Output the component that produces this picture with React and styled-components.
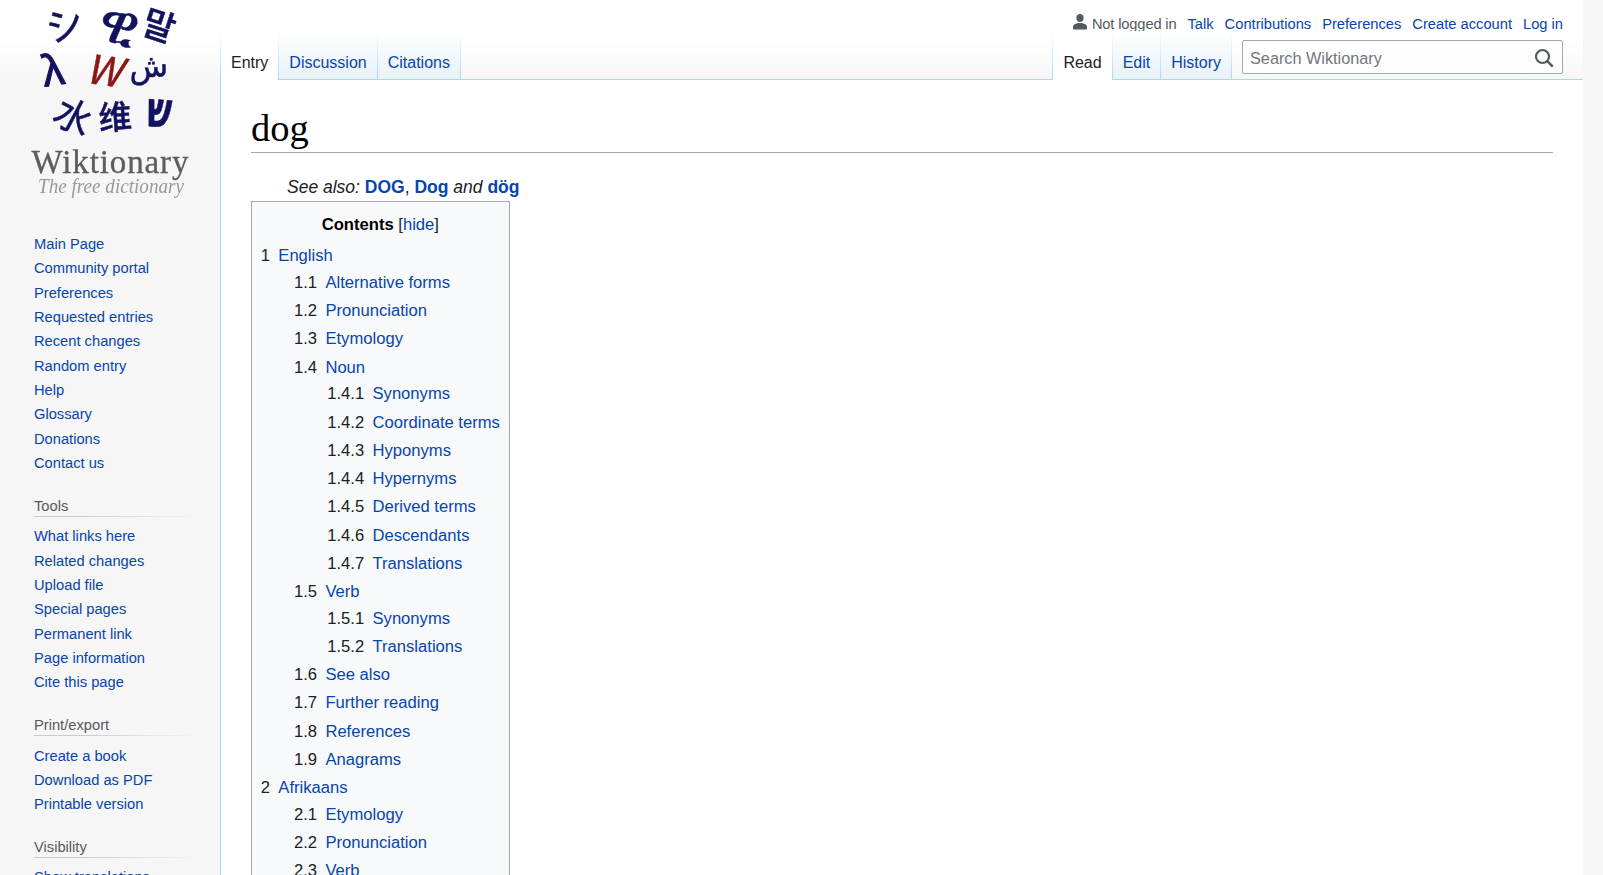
import React from "react";
import styled, { createGlobalStyle } from "styled-components";

const mainNav = [
  "Main Page",
  "Community portal",
  "Preferences",
  "Requested entries",
  "Recent changes",
  "Random entry",
  "Help",
  "Glossary",
  "Donations",
  "Contact us",
];
const portals = [
  {
    title: "Tools",
    links: [
      "What links here",
      "Related changes",
      "Upload file",
      "Special pages",
      "Permanent link",
      "Page information",
      "Cite this page",
    ],
  },
  {
    title: "Print/export",
    links: ["Create a book", "Download as PDF", "Printable version"],
  },
  { title: "Visibility", links: ["Show translations"] },
];
const toc = [
  {
    num: "1",
    name: "English",
    items: [
      { num: "1.1", name: "Alternative forms" },
      { num: "1.2", name: "Pronunciation" },
      { num: "1.3", name: "Etymology" },
      {
        num: "1.4",
        name: "Noun",
        items: [
          { num: "1.4.1", name: "Synonyms" },
          { num: "1.4.2", name: "Coordinate terms" },
          { num: "1.4.3", name: "Hyponyms" },
          { num: "1.4.4", name: "Hypernyms" },
          { num: "1.4.5", name: "Derived terms" },
          { num: "1.4.6", name: "Descendants" },
          { num: "1.4.7", name: "Translations" },
        ],
      },
      {
        num: "1.5",
        name: "Verb",
        items: [
          { num: "1.5.1", name: "Synonyms" },
          { num: "1.5.2", name: "Translations" },
        ],
      },
      { num: "1.6", name: "See also" },
      { num: "1.7", name: "Further reading" },
      { num: "1.8", name: "References" },
      { num: "1.9", name: "Anagrams" },
    ],
  },
  {
    num: "2",
    name: "Afrikaans",
    items: [
      { num: "2.1", name: "Etymology" },
      { num: "2.2", name: "Pronunciation" },
      { num: "2.3", name: "Verb" },
    ],
  },
];

const Logo = () => (
  <LogoSvg viewBox="0 0 220 200" width="220" height="200">
    <Glyph transform="translate(69 38) rotate(-18)" fontSize="38">シ</Glyph>
    <Glyph transform="translate(114 43) rotate(15)" fontSize="58">ዊ</Glyph>
    <Glyph transform="translate(155 38) rotate(18)" fontSize="35" fontWeight="500">말</Glyph>
    <Glyph transform="translate(55 85) rotate(-8)" fontSize="40" strokeWidth="1.2" fontFamily="'DejaVu Serif', serif">λ</Glyph>
    <Glyph $red transform="translate(102 85) rotate(8)" fontSize="40" fontFamily="'Liberation Serif', serif" fontStyle="italic">W</Glyph>
    <Glyph transform="translate(149 77) rotate(-3)" fontSize="32" fontFamily="'DejaVu Sans', sans-serif">ش</Glyph>
    <Glyph transform="translate(67 129) rotate(28)" fontSize="38">水</Glyph>
    <Glyph transform="translate(116 129) rotate(-4)" fontSize="33" fontWeight="500">维</Glyph>
    <Glyph transform="translate(158 127) rotate(5) scale(0.8 1.25)" fontSize="40" fontFamily="'Liberation Serif', serif" fontWeight="700">ש</Glyph>
    <Wordmark x="110" y="173" textLength="157">Wiktionary</Wordmark>
    <Tagline x="111" y="193" textLength="146" lengthAdjust="spacingAndGlyphs">
      The free dictionary
    </Tagline>
  </LogoSvg>
);

const UserIcon = () => (
  <svg width="14" height="16" viewBox="0 0 14 16" fill="#54595d">
    <ellipse cx="7" cy="4" rx="3.6" ry="4" />
    <path d="M0 15.5v-2.6C0 10.6 3 9 7 9s7 1.6 7 3.9v2.6z" />
  </svg>
);

const SearchIcon = () => (
  <svg width="20" height="20" viewBox="0 0 20 20" fill="none" stroke="#54595d" strokeWidth="2.2">
    <circle cx="8.5" cy="8.5" r="6.5" />
    <path d="M13.2 13.2l5.6 5.4" strokeWidth="2.4" />
  </svg>
);

const TocList = ({ items, nested }) => (
  <TocItems $nested={nested}>
    {items.map((item) => (
      <TocItem key={item.num}>
        <TocRow>
          <TocNumber>{item.num}</TocNumber>
          <Link href="#">{item.name}</Link>
        </TocRow>
        {item.items && <TocList items={item.items} nested />}
      </TocItem>
    ))}
  </TocItems>
);

const App = () => {
  return (
    <Page>
      <GlobalStyle />
      <Sidebar>
        <Logo />
        <MainNav>
          {mainNav.map((name) => (
            <NavItem key={name}>
              <Link href="#">{name}</Link>
            </NavItem>
          ))}
        </MainNav>
        {portals.map((portal) => (
          <Portal key={portal.title}>
            <PortalTitle>{portal.title}</PortalTitle>
            <ul>
              {portal.links.map((name) => (
                <NavItem key={name}>
                  <Link href="#">{name}</Link>
                </NavItem>
              ))}
            </ul>
          </Portal>
        ))}
      </Sidebar>
      <Main>
        <Head>
          <Tabs>
            <Tab $selected>Entry</Tab>
            <Tab>
              <Link href="#">Discussion</Link>
            </Tab>
            <Tab>
              <Link href="#">Citations</Link>
            </Tab>
          </Tabs>
          <HeadRight>
            <Personal>
              <UserIcon />
              <NotLogged>Not logged in</NotLogged>
              <Link href="#">Talk</Link>
              <Link href="#">Contributions</Link>
              <Link href="#">Preferences</Link>
              <Link href="#">Create account</Link>
              <Link href="#">Log in</Link>
            </Personal>
            <HeadActions>
              <Tabs>
                <Tab $selected>Read</Tab>
                <Tab>
                  <Link href="#">Edit</Link>
                </Tab>
                <Tab>
                  <Link href="#">History</Link>
                </Tab>
              </Tabs>
              <Search>
                <SearchInput placeholder="Search Wiktionary" />
                <SearchIcon />
              </Search>
            </HeadActions>
          </HeadRight>
        </Head>
        <Content>
          <Title>dog</Title>
          <SeeAlso>
            See also: <BoldLink href="#">DOG</BoldLink>
            <Upright>,</Upright> <BoldLink href="#">Dog</BoldLink> and{" "}
            <BoldLink href="#">dög</BoldLink>
          </SeeAlso>
          <Toc>
            <TocTitle>
              <strong>Contents</strong> [<Link href="#">hide</Link>]
            </TocTitle>
            <TocList items={toc} />
          </Toc>
        </Content>
      </Main>
      <Track />
    </Page>
  );
};

const GlobalStyle = createGlobalStyle`
  html, body {
    margin: 0;
    height: 100%;
    overflow: hidden;
    background: #f6f6f6;
    font-family: "Liberation Sans", Arial, sans-serif;
    color: #202122;
  }
  ul {
    list-style: none;
    margin: 0;
    padding: 0;
  }
`;
const Page = styled.div`
  display: grid;
  grid-template-columns: 220px 1fr 20px;
  height: 875px;
  overflow: hidden;
`;
const Link = styled.a`
  color: #0645ad;
  text-decoration: none;
`;
const Sidebar = styled.nav`
  background: linear-gradient(#fff 50%, #f6f6f6 100%) no-repeat;
  background-size: 100% 80px;
  font-size: 14.7px;
`;
const LogoSvg = styled.svg`
  display: block;
  filter: blur(0.35px);
`;
const Glyph = styled.text`
  font-family: "Noto Sans CJK SC", "Noto Sans CJK KR", "DejaVu Sans", sans-serif;
  text-anchor: middle;
  fill: ${(p) => (p.$red ? "#8c1515" : "#12125e")};
  stroke: ${(p) => (p.$red ? "#8c1515" : "#12125e")};
  stroke-width: ${(p) => p.strokeWidth || 0.5}px;
`;
const Wordmark = styled.text`
  font-family: "Liberation Serif", serif;
  font-size: 33px;
  text-anchor: middle;
  fill: #5c5c5c;
  stroke: #5c5c5c;
  stroke-width: 0.3px;
`;
const Tagline = styled.text`
  font-family: "Liberation Serif", serif;
  font-size: 21px;
  font-style: italic;
  text-anchor: middle;
  fill: #999;
`;
const MainNav = styled.ul`
  margin: 32px 0 0 34px;
`;
const NavItem = styled.li`
  padding: 3.75px 0;
  line-height: 16.875px;
  white-space: nowrap;
`;
const Portal = styled.div`
  margin: 20.1px 22px 0 34px;
`;
const PortalTitle = styled.h3`
  margin: 0 0 7.6px;
  padding-bottom: 1px;
  font-size: 14.7px;
  font-weight: 400;
  line-height: 20px;
  color: #54595d;
  background: linear-gradient(to right, #c8ccd1 30%, rgba(200, 204, 209, 0)) no-repeat bottom;
  background-size: 100% 1px;
`;
const Main = styled.div`
  min-width: 0;
`;
const Head = styled.header`
  display: flex;
  justify-content: space-between;
  align-items: flex-end;
  height: 80px;
  background:
    linear-gradient(#a7d7f9, #a7d7f9) no-repeat bottom / 100% 1px,
    linear-gradient(#fff 50%, #f6f6f6 100%);
`;
const HeadRight = styled.div`
  display: flex;
  flex-direction: column;
  align-items: flex-end;
`;
const Personal = styled.div`
  display: flex;
  align-items: center;
  gap: 11px;
  height: 31px;
  padding: 16px 20px 0 0;
  box-sizing: border-box;
  font-size: 14.7px;
  line-height: 18px;
  svg {
    margin: -3px -6px 0 0;
  }
`;
const NotLogged = styled.span`
  color: #54595d;
  letter-spacing: -0.15px;
`;
const HeadActions = styled.div`
  display: flex;
  align-items: flex-end;
  gap: 10px;
  padding-right: 20px;
`;
const Tabs = styled.div`
  display: flex;
  padding-left: 1px;
  background: linear-gradient(to bottom, #fff 0, #a7d7f9 100%) no-repeat left;
  background-size: 1px 100%;
`;
const Tab = styled.div`
  height: 49px;
  box-sizing: border-box;
  padding: 22px 11px 0 10px;
  font-size: 16px;
  line-height: 20px;
  border-bottom: ${(p) => (p.$selected ? "0" : "1px solid #a7d7f9")};
  background:
    linear-gradient(to bottom, #fff 0, #a7d7f9 100%) no-repeat right / 1px 100%,
    ${(p) =>
      p.$selected ? "#fff" : "linear-gradient(to top, #e8f2f8 0, #fff 100%)"};
`;
const Search = styled.div`
  display: flex;
  align-items: center;
  width: 321px;
  height: 34px;
  margin-bottom: 6px;
  padding: 2px 8px 0 7px;
  box-sizing: border-box;
  border: 1px solid #a2a9b1;
  border-radius: 2px;
  background: rgba(255, 255, 255, 0.6);
  svg {
    flex: none;
  }
`;
const SearchInput = styled.input`
  flex: 1;
  min-width: 0;
  padding: 0;
  border: 0;
  outline: 0;
  background: none;
  font-family: inherit;
  font-size: 16.25px;
  &::placeholder {
    color: #72777d;
    opacity: 1;
  }
`;
const Content = styled.main`
  height: 795px;
  padding: 25px 30px 0;
  box-sizing: border-box;
  background: #fff;
  border-left: 1px solid #a7d7f9;
`;
const Title = styled.h1`
  margin: 0;
  font-family: "Liberation Serif", serif;
  font-size: 38.5px;
  font-weight: 400;
  line-height: 46.8px;
  color: #000;
  border-bottom: 1px solid #a2a9b1;
`;
const SeeAlso = styled.div`
  margin: 20px 0 0 36px;
  font-size: 17.5px;
  font-style: italic;
  line-height: 28px;
`;
const Upright = styled.span`
  font-style: normal;
`;
const BoldLink = styled(Link)`
  font-style: normal;
  font-weight: 700;
`;
const Toc = styled.div`
  width: fit-content;
  padding: 9.75px 8.75px 8.75px;
  border: 1px solid #a2a9b1;
  background: #f8f9fa;
  font-size: 16.625px;
  line-height: 26.6px;
`;
const TocTitle = styled.div`
  margin-bottom: 5.2px;
  text-align: center;
  strong {
    color: #000;
  }
`;
const TocItems = styled.ul`
  margin-left: ${(p) => (p.$nested ? "33.25px" : "0")};
`;
const TocItem = styled.li`
  margin-bottom: 1.66px;
`;
const TocRow = styled.div`
  white-space: nowrap;
`;
const TocNumber = styled.span`
  padding-right: 8.3px;
`;
const Track = styled.div`
  background: #f6f6f6;
`;

export default App;
